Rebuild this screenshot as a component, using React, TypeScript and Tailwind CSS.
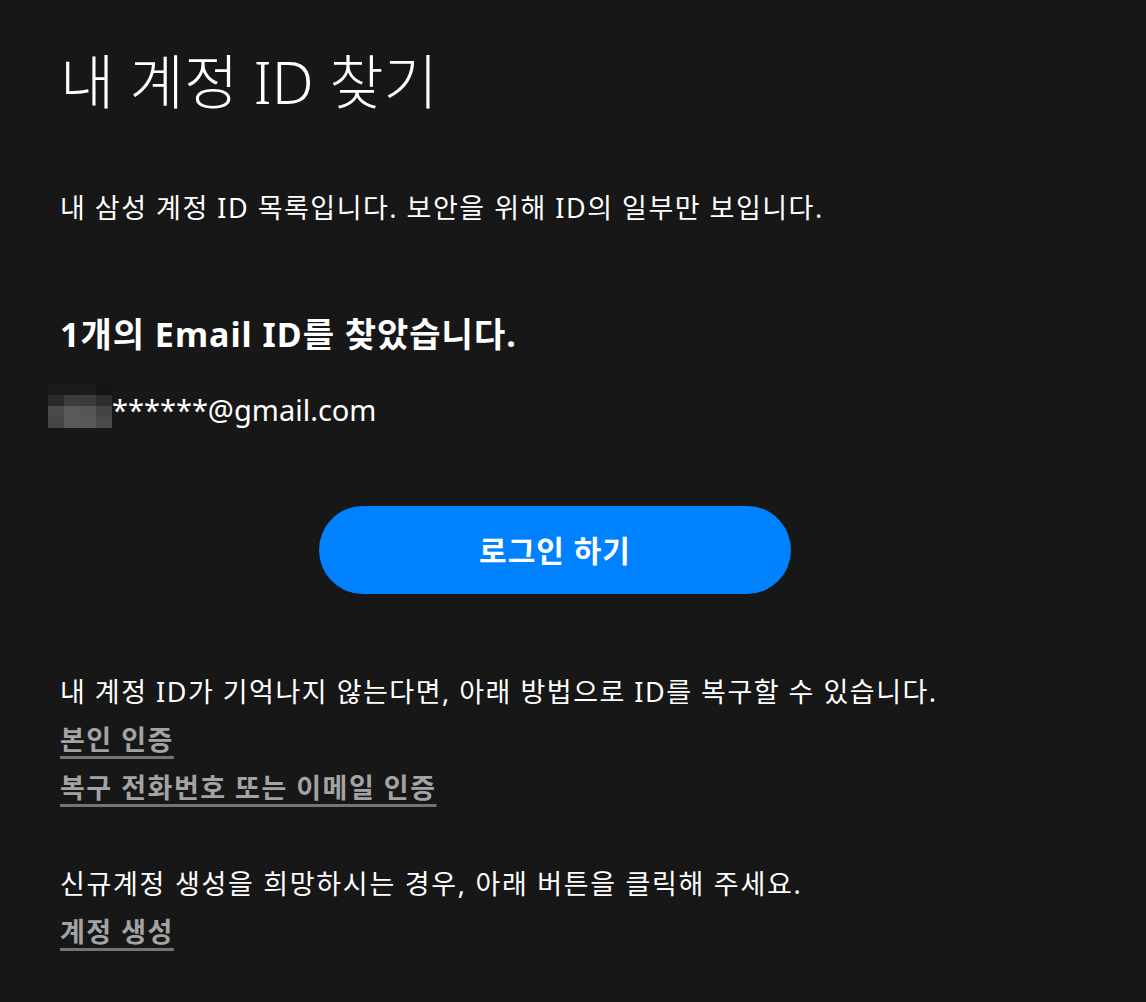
const font = { fontFamily: '"Noto Sans", "Noto Sans CJK KR", sans-serif' }

const pixels = [
  ["#1a1a1a", "#1c1c1c", "#1b1b1b", "#151515"],
  ["#2a2a2a", "#3c3c3c", "#3a3a3a", "#2e2e2e"],
  ["#4a4a4a", "#5a5a5a", "#555555", "#444444"],
  ["#454545", "#595959", "#585858", "#4a4a4a"],
]

function Masked() {
  return (
    <div className="grid grid-cols-4 w-[64px] h-[44px]">
      {pixels.flat().map((c, i) => (
        <div key={i} style={{ backgroundColor: c }} />
      ))}
    </div>
  )
}

const link =
  "block text-[27px] leading-[48px] font-bold tracking-[1.5px] text-[#a3a3a3] underline underline-offset-[6px] decoration-[3px] decoration-[#747474]"

export default function App() {
  return (
    <div className="min-h-[1002px] w-full bg-[#171717] text-white" style={font}>
      <div className="pl-[60px] pr-[96px] pt-[41px]">
        <h1 className="text-[59px] font-light leading-[80px]">내 계정 ID 찾기</h1>
        <p className="mt-[69px] text-[27px] leading-[36px] tracking-[1.5px]">내 삼성 계정 ID 목록입니다. 보안을 위해 ID의 일부만 보입니다.</p>
        <h2 className="mt-[88px] text-[34px] font-bold leading-[40px] tracking-[1px]">1개의 Email ID를 찾았습니다.</h2>
        <div className="mt-[30px] flex items-end -ml-[12px]">
          <Masked />
          <span className="text-[29px] leading-[36px]">******@gmail.com</span>
        </div>
        <div className="mt-[78px] flex justify-center">
          <button className="w-[472px] h-[88px] rounded-full bg-[#0081ff] text-[30px] font-bold tracking-[1px]">로그인 하기</button>
        </div>
        <p className="mt-[74px] text-[27px] leading-[48px] tracking-[1.5px]">내 계정 ID가 기억나지 않는다면, 아래 방법으로 ID를 복구할 수 있습니다.</p>
        <a className={link}>본인 인증</a>
        <a className={link}>복구 전화번호 또는 이메일 인증</a>
        <p className="mt-[48px] text-[27px] leading-[48px] tracking-[1.7px]">신규계정 생성을 희망하시는 경우, 아래 버튼을 클릭해 주세요.</p>
        <a className={link}>계정 생성</a>
      </div>
    </div>
  )
}
